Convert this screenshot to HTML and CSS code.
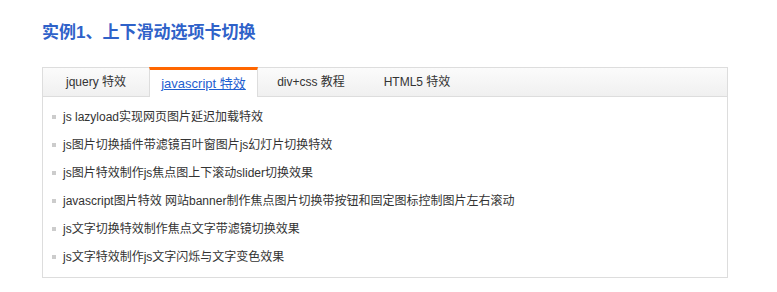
FILE: index.html
```html
<!DOCTYPE html>
<html lang="zh-CN">
<head>
  <meta charset="UTF-8">
  <title>实例1、上下滑动选项卡切换</title>
  <link rel="stylesheet" href="styles.css">
</head>
<body>
  <div class="page">
    <h2 class="title">实例1、上下滑动选项卡切换</h2>

    <div class="tabbox">
      <ul class="tabs">
        <li class="tab">jquery 特效</li>
        <li class="tab active"><a href="#">javascript 特效</a></li>
        <li class="tab">div+css 教程</li>
        <li class="tab">HTML5 特效</li>
      </ul>

      <ul class="list">
        <li><a href="#">js lazyload实现网页图片延迟加载特效</a></li>
        <li><a href="#">js图片切换插件带滤镜百叶窗图片js幻灯片切换特效</a></li>
        <li><a href="#">js图片特效制作js焦点图上下滚动slider切换效果</a></li>
        <li><a href="#">javascript图片特效 网站banner制作焦点图片切换带按钮和固定图标控制图片左右滚动</a></li>
        <li><a href="#">js文字切换特效制作焦点文字带滤镜切换效果</a></li>
        <li><a href="#">js文字特效制作js文字闪烁与文字变色效果</a></li>
      </ul>
    </div>
  </div>
</body>
</html>
```

FILE: styles.css
```css
* {
  margin: 0;
  padding: 0;
  box-sizing: border-box;
}

body {
  font-family: "Liberation Sans", "Noto Sans CJK SC", sans-serif;
  font-size: 12px;
  color: #333;
  background: #fff;
}

ul {
  list-style: none;
}

a {
  color: #333;
  text-decoration: none;
}

.page {
  padding: 21px 0 0 42px;
}

.title {
  font-size: 17px;
  line-height: 24px;
  font-weight: bold;
  color: #2f62c9;
  margin-bottom: 22px;
}

/* tab box */
.tabbox {
  width: 686px;
  border: 1px solid #ddd;
}

.tabs {
  display: flex;
  align-items: flex-start;
  height: 29px;
  background: linear-gradient(#fbfbfb, #f0f0f0);
  border-bottom: 1px solid #ddd;
}

.tab {
  width: 106px;
  line-height: 29px;
  text-align: center;
  color: #333;
}

.tab.active {
  width: 109px;
  height: 30px;
  margin-top: -1px;
  line-height: 27px;
  background: #fff;
  border: 1px solid #ddd;
  border-top: 3px solid #f60;
  border-bottom: none;
}

.tab.active a {
  color: #1f5fd0;
  text-decoration: underline;
  font-size: 13px;
}

/* list */
.list {
  padding: 6px 0 6px 9px;
}

.list li {
  display: flex;
  align-items: center;
  line-height: 28px;
}

.list li::before {
  content: "";
  width: 4px;
  height: 4px;
  margin-right: 7px;
  background: #ccc;
}
```
